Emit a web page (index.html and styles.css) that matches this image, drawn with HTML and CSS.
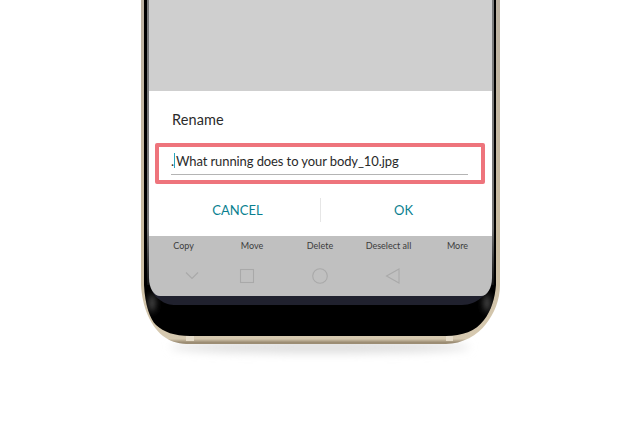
FILE: index.html
```html
<!DOCTYPE html>
<html lang="en">
<head>
<meta charset="utf-8">
<title>Rename</title>
<link rel="stylesheet" href="styles.css">
</head>
<body>
<main class="stage">
  <svg class="device" viewBox="0 0 640 426" width="640" height="426" aria-hidden="true">
    <defs>
      <linearGradient id="gold" x1="0" x2="0" y1="0" y2="1">
        <stop offset="0" stop-color="#bdb2a2"/>
        <stop offset="0.7" stop-color="#c9bba0"/>
        <stop offset="0.985" stop-color="#d6c9b0"/>
        <stop offset="0.995" stop-color="#9c8d74"/>
      </linearGradient>
      <linearGradient id="bezel" x1="0" x2="0" y1="0" y2="1">
        <stop offset="0" stop-color="#7d7d7d"/>
        <stop offset="0.8" stop-color="#777"/>
        <stop offset="1" stop-color="#111"/>
      </linearGradient>
      <filter id="blurBig" x="-20%" y="-200%" width="140%" height="500%"><feGaussianBlur stdDeviation="5"/></filter>
      <filter id="blurSmall" x="-200%" y="-100%" width="500%" height="300%"><feGaussianBlur stdDeviation="3"/></filter>
      <clipPath id="inner">
        <path d="M144 0V285C145 305 150 319 156 325C164 332 174 336 190 336H446C462 336 476 331 484 320C491 311 495 298 496 285V0Z"/>
      </clipPath>
    </defs>
    <ellipse cx="320" cy="347" rx="150" ry="6" fill="#dddddd" filter="url(#blurBig)"/>
    <path d="M141 0V285C142 305 150 328 166 338C172 342 180 344 190 344H446C462 344 478 335 486 324C494 314 500 300 500 285V0Z" fill="url(#gold)"/>
    <path d="M186 336H194V341H186ZM446 336H453V341H446Z" fill="#e6dcc9"/>
    <path d="M144 0V285C145 305 150 319 156 325C164 332 174 336 190 336H446C462 336 476 331 484 320C491 311 495 298 496 285V0Z" fill="#000"/>
    <g clip-path="url(#inner)">
      <rect x="147" y="0" width="2" height="285" fill="url(#bezel)"/>
      <rect x="492" y="0" width="2" height="285" fill="url(#bezel)"/>
      <ellipse cx="152" cy="303" rx="3" ry="9" fill="#555" filter="url(#blurSmall)"/>
      <ellipse cx="487" cy="303" rx="3" ry="9" fill="#555" filter="url(#blurSmall)"/>
    </g>
    <path d="M149 270C149 288 153 296 160 300C165 304 170 305 176 305H462C470 305 476 302 481 298C487 294 491 286 492 270Z" fill="#20212e"/>
  </svg>

  <section class="screen">
    <div class="backdrop"></div>
    <div class="dialog">
      <h1 class="title">Rename</h1>
      <div class="field-highlight">
        <div class="field">
          <span class="dot">.</span><span class="caret"></span><span>What running does to your body_10.jpg</span>
        </div>
      </div>
      <div class="actions">
        <button class="action">CANCEL</button>
        <span class="divider"></span>
        <button class="action">OK</button>
      </div>
    </div>
    <div class="bottom">
      <ul class="menu">
        <li>Copy</li>
        <li>Move</li>
        <li>Delete</li>
        <li>Deselect all</li>
        <li>More</li>
      </ul>
      <div class="nav">
        <svg class="nav-icon" viewBox="0 0 16 16" width="16" height="16"><path d="M2 4.500L8 10.500L14 4.500" /></svg>
        <svg class="nav-icon" viewBox="0 0 16 16" width="16" height="16"><rect x="1.500" y="1.500" width="13" height="13" /></svg>
        <svg class="nav-icon" viewBox="0 0 16 16" width="16" height="16"><circle cx="8" cy="8" r="7.300" /></svg>
        <svg class="nav-icon" viewBox="0 0 16 16" width="16" height="16"><path d="M14 1V15L1.500 8Z" /></svg>
      </div>
    </div>
  </section>
</main>
</body>
</html>
```

FILE: styles.css
```css
* { box-sizing: border-box; }
html, body { margin: 0; padding: 0; background: #fff; }
.stage {
  position: relative;
  width: 640px;
  height: 426px;
  overflow: hidden;
  padding-left: 149px;
  font-family: "Lato", "Liberation Sans", sans-serif;
}
.device { position: absolute; left: 0; top: 0; display: block; }
.screen {
  position: relative;
  width: 343px;
  height: 296px;
  display: flex;
  flex-direction: column;
  overflow: hidden;
  border-radius: 0 0 11px 11px / 0 0 18px 18px;
}
.backdrop { height: 91px; background: #cfcfcf; flex: none; }
.dialog {
  height: 145px;
  flex: none;
  background: #fff;
  padding: 19px 6px 0;
  display: flex;
  flex-direction: column;
}
.title {
  margin: 0 0 0 17px;
  font-size: 14.500px;
  line-height: 19px;
  font-weight: 400;
  color: #2b2b2b;
  letter-spacing: 0.1px;
}
.field-highlight {
  margin-top: 14px;
  width: 330px;
  height: 41px;
  border: 4px solid #ee747c;
  border-radius: 2px;
  padding: 0 13px 0 12px;
}
.field {
  height: 28px;
  display: flex;
  align-items: center;
  border-bottom: 1px solid #b4b4b4;
  font-size: 13px;
  letter-spacing: -0.100px;
  color: #2a2a2a;
  white-space: pre;
}
.caret {
  display: inline-block;
  width: 1px;
  height: 15px;
  background: #2aa5bd;
  margin-right: 1px;
}
.actions {
  margin-top: 13px;
  display: flex;
  align-items: center;
  height: 26px;
}
.action {
  flex: 1;
  border: 0;
  background: none;
  padding: 0;
  font: inherit;
  font-size: 13px;
  color: #0a7f90;
}
.divider { width: 1px; height: 24px; background: #e6e6e6; flex: none; }
.bottom { flex: 1; background: #c0c0c0; }
.menu {
  list-style: none;
  margin: 0;
  padding: 4px 0 0;
  display: grid;
  grid-template-columns: 69px 68px 68px 69px 69px;
  font-size: 9px;
  line-height: 12px;
  color: #3c3c3c;
  text-align: center;
}
.nav {
  margin-top: 16px;
  padding-left: 35px;
  display: flex;
  gap: 57px;
}
.nav-icon { fill: none; stroke: #a9a9a9; stroke-width: 1.100; display: block; }
.nav-icon:first-child { margin-right: -18px; }
```
